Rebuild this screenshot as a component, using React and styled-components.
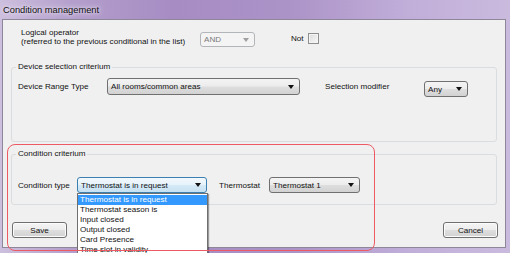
import React from 'react';
import styled, { createGlobalStyle, css } from 'styled-components';

const GlobalStyle = createGlobalStyle`
  html, body {
    margin: 0;
    padding: 0;
    background: #ffffff;
  }
  body {
    font-family: "Liberation Sans", Arial, sans-serif;
    color: #111111;
  }
`;

const Window = styled.div`
  position: relative;
  width: 510px;
  height: 253px;
  overflow: hidden;
  display: flex;
  flex-direction: column;
  padding: 0 4px 5px 2px;
  box-sizing: border-box;
  background: linear-gradient(90deg, #cdbfde 0%, #b49fcc 14%, #a68cc3 34%, #ab92c7 56%, #c1aed9 80%, #cabade 100%);
`;

const TitleBar = styled.div`
  height: 19px;
  display: flex;
  align-items: center;
  padding-left: 1px;
  font-size: 9.3px;
  color: #101010;
  text-shadow: 0 0 6px #efe8f6, 0 0 3px #efe8f6;
`;

const Body = styled.div`
  flex: 1;
  display: flex;
  flex-direction: column;
  background: #f0f0f0;
  border: 1px solid #8e879a;
  font-size: 8.1px;
`;

const TopRow = styled.div`
  display: flex;
  align-items: flex-start;
  padding: 8px 0 0 18px;
`;

const LogicalLabel = styled.div`
  width: 179px;
  line-height: 9px;
`;

const Label = styled.div`
  width: ${({ $w }) => $w}px;
  margin-top: ${({ $top = 0 }) => $top}px;
  margin-left: ${({ $left = 0 }) => $left}px;
  line-height: 9px;
  white-space: nowrap;
`;

const Checkbox = styled.div`
  width: 9px;
  height: 9px;
  margin-top: 5px;
  margin-left: 4px;
  border: 1px solid #8f8f8f;
  background: linear-gradient(135deg, #dcdcdc, #f8f8f8);
  box-shadow: inset 0 0 0 1px #f4f4f4;
`;

const Group = styled.fieldset`
  margin: ${({ $top }) => $top}px 8px 0 8px;
  padding: ${({ $pt }) => $pt}px 0 ${({ $pb }) => $pb}px 6px;
  border: 1px solid #d9dde0;
  border-radius: 3px;
  min-width: 0;
`;

const Legend = styled.legend`
  padding: 0 2px;
  margin-left: -2px;
  line-height: 10px;
  font-size: 8.1px;
`;

const Row = styled.div`
  display: flex;
  align-items: ${({ $align = 'center' }) => $align};
`;

const SelectBox = styled.div`
  position: relative;
  box-sizing: border-box;
  width: ${({ $w }) => $w}px;
  height: ${({ $h = 16 }) => $h}px;
  margin-top: ${({ $top = 0 }) => $top}px;
  margin-left: ${({ $left = 0 }) => $left}px;
  display: flex;
  align-items: center;
  padding: 0 3px;
  border: 1px solid #707070;
  border-radius: 3px;
  background: linear-gradient(#f4f4f4 0%, #ececec 48%, #dedede 52%, #d2d2d2 100%);
  white-space: nowrap;
  ${({ $focus }) => $focus && css`
    border-color: #3c7fb1;
    background: linear-gradient(#f3f9fd 0%, #e6f2fa 48%, #d6eaf7 52%, #c6e1f3 100%);
  `}
  ${({ $disabled }) => $disabled && css`
    border-color: #b2b6b9;
    background: #f4f4f4;
    color: #7a7a7a;
  `}
`;

const Arrow = styled.span`
  margin-left: auto;
  width: 0;
  height: 0;
  border-left: 3.5px solid transparent;
  border-right: 3.5px solid transparent;
  border-top: 4px solid ${({ $disabled }) => ($disabled ? '#a0a0a0' : '#111')};
  margin-right: 2px;
`;

const List = styled.div`
  position: absolute;
  top: 15px;
  left: -1px;
  width: 131px;
  box-sizing: border-box;
  padding-top: 1px;
  background: #ffffff;
  border: 1px solid #6f6f6f;
  box-shadow: 1px 1px 1px rgba(0, 0, 0, 0.35);
  z-index: 2;
`;

const Option = styled.div`
  height: 10px;
  line-height: 10px;
  padding-left: 2px;
  color: ${({ $active }) => ($active ? '#ffffff' : '#111')};
  background: ${({ $active }) => ($active ? '#3399ff' : 'transparent')};
`;

const ButtonRow = styled.div`
  display: flex;
  justify-content: space-between;
  margin: 17px 7px 0 9px;
`;

const Button = styled.div`
  box-sizing: border-box;
  width: 55px;
  height: 16px;
  display: flex;
  align-items: center;
  justify-content: center;
  border: 1px solid #707070;
  border-radius: 3px;
  background: linear-gradient(#f4f4f4 0%, #ececec 48%, #dedede 52%, #d2d2d2 100%);
  box-shadow: inset 0 0 0 1px #fbfbfb;
`;

const Highlight = styled.div`
  position: absolute;
  left: 7px;
  top: 144px;
  width: 368px;
  height: 107px;
  box-sizing: border-box;
  border: 1.5px solid #ee5a64;
  border-radius: 8px;
  pointer-events: none;
  z-index: 3;
`;

const options = [
  'Thermostat is in request',
  'Thermostat season is',
  'Input closed',
  'Output closed',
  'Card Presence',
  'Time slot in validity',
];

const Select = ({ value, w, h, top, left, focus, disabled, open }) => (
  <SelectBox $w={w} $h={h} $top={top} $left={left} $focus={focus} $disabled={disabled}>
    {value}
    <Arrow $disabled={disabled} />
    {open && (
      <List>
        {options.map((o, i) => (
          <Option key={o} $active={i === 0}>{o}</Option>
        ))}
      </List>
    )}
  </SelectBox>
);

export default function App() {
  return (
    <>
      <GlobalStyle />
      <Window>
        <TitleBar>Condition management</TitleBar>
        <Body>
          <TopRow>
            <LogicalLabel>
              Logical operator
              <br />
              (referred to the previous conditional in the list)
            </LogicalLabel>
            <Select value="AND" w={55} h={15} top={4} disabled />
            <Label $left={36} $top={6}>Not</Label>
            <Checkbox />
          </TopRow>

          <Group $top={15} $pt={6} $pb={44}>
            <Legend>Device selection criterium</Legend>
            <Row $align="flex-start">
              <Label $w={89} $top={4}>Device Range Type</Label>
              <Select value="All rooms/common areas" w={193} h={17} />
              <Label $w={99} $left={25} $top={4}>Selection modifier</Label>
              <Select value="Any" w={44} h={16} top={3} />
            </Row>
          </Group>

          <Group $top={7} $pt={18} $pb={11}>
            <Legend>Condition criterium</Legend>
            <Row>
              <Label $w={59}>Condition type</Label>
              <Select value="Thermostat is in request" w={130} focus open />
              <Label $w={50} $left={12}>Thermostat</Label>
              <Select value="Thermostat 1" w={91} />
            </Row>
          </Group>

          <ButtonRow>
            <Button>Save</Button>
            <Button>Cancel</Button>
          </ButtonRow>
        </Body>
        <Highlight />
      </Window>
    </>
  );
}
